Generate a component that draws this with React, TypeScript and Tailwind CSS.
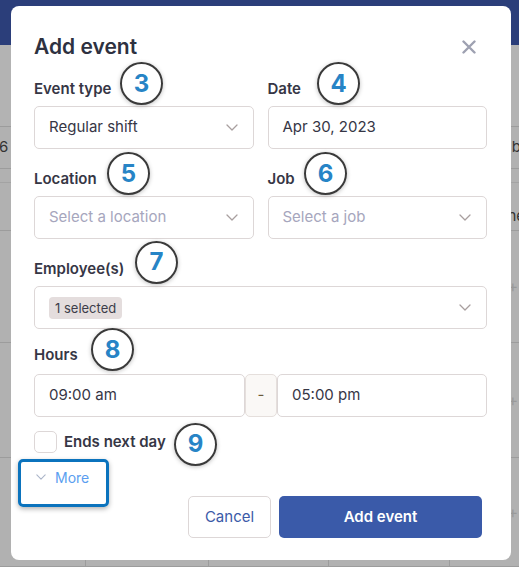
const Chevron = ({ className = "" }: { className?: string }) => (
  <svg width="12" height="7" viewBox="0 0 12 7" fill="none" className={className}>
    <path d="M1 1l5 5 5-5" stroke="currentColor" strokeWidth="1.3" strokeLinecap="round" strokeLinejoin="round" />
  </svg>
);

function Marker({ n, x, y }: { n: number; x: number; y: number }) {
  return (
    <div
      className="absolute flex h-[43px] w-[43px] items-center justify-center rounded-full border-2 border-[#3a3a3a] text-[24px] font-bold text-[#2784c6] shadow-[0_1px_4px_rgba(0,0,0,0.25)]"
      style={{ left: x - 21.5, top: y - 21.5 }}
    >
      {n}
    </div>
  );
}

function Select({ value, placeholder }: { value?: string; placeholder?: string }) {
  return (
    <div className="flex h-[43px] items-center justify-between rounded-[5px] border border-[#ddd7d7] bg-white pl-[14px] pr-[15px]">
      <span className={value ? "text-[15px] text-[#363645]" : "text-[15px] text-[#a6a6bd]"}>{value ?? placeholder}</span>
      <Chevron className="text-[#a89f9f]" />
    </div>
  );
}

function Label({ children }: { children: React.ReactNode }) {
  return <div className="h-[20px] text-[15px] font-semibold leading-[20px] text-[#363645]">{children}</div>;
}

function Background() {
  const cols = ["w-[86px]", "w-[123px]", "w-[120px]", "w-[121px]", "flex-1"];
  return (
    <div className="flex h-full flex-col">
      <div className="h-[45px] bg-[#2b3e7a]" />
      <div className="h-[83px] border-b border-[#9c9c9c] bg-[#b3b3b3]" />
      <div className="flex h-[43px] items-center justify-between border-b border-[#9c9c9c] text-[15px] text-[#333]">
        <span className="-ml-[1px]">6</span>
        <span className="mr-[-2px]">b</span>
      </div>
      <div className="h-[14px] border-b border-[#a3a3a3]" />
      <div className="flex h-[48px] items-end justify-end border-b border-[#9c9c9c] pb-[2px] text-[15px] text-[#333]">
        <span className="mr-[-6px]">ne</span>
      </div>
      {[114, 116, 110].map((h, i) => (
        <div key={i} className="flex border-b border-[#9c9c9c]" style={{ height: h }}>
          {cols.map((c, j) => (
            <div key={j} className={`${c} ${j < 4 ? "border-r border-[#9c9c9c]" : ""} flex items-center justify-end pr-[1px] text-[#999]`}>
              {j === 4 ? "+" : ""}
            </div>
          ))}
        </div>
      ))}
    </div>
  );
}

export default function App() {
  return (
    <div className="relative h-[567px] w-[519px] overflow-hidden bg-[#b1b1b1] font-['Inter',sans-serif]">
      <Background />

      <div className="absolute left-[11px] top-[6px] h-[554px] w-[500px] rounded-[8px] bg-white pl-[23px] pr-[24px] pt-[27px]">
        <div className="flex h-[28px] items-center justify-between">
          <h2 className="text-[21px] font-semibold leading-[28px] text-[#2e3140]">Add event</h2>
          <svg width="14" height="14" viewBox="0 0 14 14" className="mr-[11px] text-[#9ea1b1]">
            <path d="M1.5 1.5l11 11M12.5 1.5l-11 11" stroke="currentColor" strokeWidth="2.4" strokeLinecap="round" />
          </svg>
        </div>

        <div className="mt-[18px] grid grid-cols-2 gap-x-[14px]">
          <div>
            <Label>Event type</Label>
            <div className="mt-[7px]">
              <Select value="Regular shift" />
            </div>
          </div>
          <div>
            <Label>Date</Label>
            <div className="mt-[7px] flex h-[43px] items-center rounded-[5px] border border-[#ddd7d7] pl-[14px] text-[15px] text-[#363645]">
              Apr 30, 2023
            </div>
          </div>
        </div>

        <div className="mt-[20px] grid grid-cols-2 gap-x-[14px]">
          <div>
            <Label>Location</Label>
            <div className="mt-[7px]">
              <Select placeholder="Select a location" />
            </div>
          </div>
          <div>
            <Label>Job</Label>
            <div className="mt-[7px]">
              <Select placeholder="Select a job" />
            </div>
          </div>
        </div>

        <div className="mt-[20px]">
          <Label>Employee(s)</Label>
          <div className="mt-[7px] flex h-[43px] items-center justify-between rounded-[5px] border border-[#ddd7d7] pl-[14px] pr-[15px]">
            <span className="rounded-[4px] bg-[#e4dddd] px-[6px] py-[3px] text-[13px] leading-[16px] text-[#3d3d4a]">1 selected</span>
            <Chevron className="text-[#a89f9f]" />
          </div>
        </div>

        <div className="mt-[16px]">
          <Label>Hours</Label>
          <div className="mt-[9px] grid h-[43px] grid-cols-[211px_32px_1fr]">
            <div className="flex items-center rounded-[5px] border border-[#ddd7d7] pl-[14px] text-[15px] text-[#363645]">09:00 am</div>
            <div className="flex items-center justify-center rounded-[5px] border border-[#e5dfdc] bg-[#faf8f6] text-[15px] text-[#6b5a3a]">-</div>
            <div className="flex items-center rounded-[5px] border border-[#ddd7d7] pl-[14px] text-[15px] text-[#363645]">05:00 pm</div>
          </div>
        </div>

        <label className="mt-[14px] flex h-[22px] items-center gap-[7px]">
          <span className="h-[22px] w-[23px] rounded-[5px] border border-[#ddd7d7] bg-white" />
          <span className="text-[15px] font-semibold text-[#363645]">Ends next day</span>
        </label>

        <div className="mt-[14px] flex h-[20px] items-center gap-[9px] pl-[2px]">
          <Chevron className="h-[6px] w-[10px] text-[#aab4c8]" />
          <span className="text-[14px] text-[#5b9ef0]">More</span>
        </div>

        <div className="mt-[9px] mr-[5px] flex justify-end gap-[8px]">
          <button className="h-[42px] w-[83px] rounded-[5px] border border-[#ddd7d7] bg-white text-[15px] text-[#3b5aa8]">Cancel</button>
          <button className="h-[42px] w-[203px] rounded-[5px] bg-[#3a5aa9] text-[15px] font-semibold text-white">Add event</button>
        </div>
      </div>

      <div className="absolute left-[18px] top-[459px] h-[48px] w-[91px] rounded-[5px] border-[3px] border-[#0b73bd] shadow-[0_2px_5px_rgba(0,0,0,0.3)]" />

      <Marker n={3} x={141.5} y={83.5} />
      <Marker n={4} x={338.5} y={83.5} />
      <Marker n={5} x={128.5} y={173.5} />
      <Marker n={6} x={325.5} y={173.5} />
      <Marker n={7} x={156.5} y={262} />
      <Marker n={8} x={112.5} y={349.5} />
      <Marker n={9} x={195.5} y={444} />
    </div>
  );
}
